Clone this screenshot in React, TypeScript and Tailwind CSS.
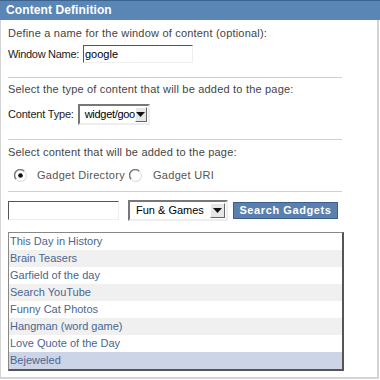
import React from 'react';

const gadgets = [
  'This Day in History',
  'Brain Teasers',
  'Garfield of the day',
  'Search YouTube',
  'Funny Cat Photos',
  'Hangman (word game)',
  'Love Quote of the Day',
  'Bejeweled',
];

function Radio({ checked }: { checked?: boolean }) {
  return (
    <svg width="13" height="13" viewBox="0 0 13 13" className="shrink-0">
      <path d="M2.2 10.3 A5.3 5.3 0 0 1 10.3 2.2" fill="none" stroke="#777" strokeWidth="1.5" />
      <path d="M10.8 2.8 A5.3 5.3 0 0 1 2.8 10.8" fill="none" stroke="#e2e2e2" strokeWidth="1.2" />
      {checked && <circle cx="6.5" cy="6.5" r="2.3" fill="#111" />}
    </svg>
  );
}

function ArrowBtn() {
  return (
    <span className="flex h-[15px] w-[15px] items-center justify-center border border-t-white border-l-white border-r-[#666] border-b-[#666] bg-[#e6e6e6]">
      <svg width="9" height="5" viewBox="0 0 9 5">
        <path d="M0 0 H9 L4.5 5 Z" fill="#111" />
      </svg>
    </span>
  );
}

export default function App() {
  return (
    <div
      className="h-[380px] w-[380px] bg-white text-[11px] leading-[13px] text-[#444]"
      style={{ fontFamily: '"Liberation Sans", Arial, sans-serif' }}
    >
      <div className="flex h-[379px] w-[379px] flex-col border-b-2 border-l border-r-2 border-[#d4d4d4]">
        <div className="-ml-px flex h-[20px] w-[380px] items-center border-t border-[#3c6390] bg-[#5a86b5] pl-[6px] text-[12px] font-bold tracking-[0.1px] text-white">
          Content Definition
        </div>

        <div className="flex flex-col pl-[7px] pr-[35px]">
          <div className="mt-[7px] tracking-[0.2px]">Define a name for the window of content (optional):</div>
          <div className="mt-[5px] flex items-center">
            <span className="tracking-[-0.3px] text-[#222]">Window Name:</span>
            <div className="ml-[4px] flex h-[18px] w-[110px] items-center border border-t-[#555] border-l-[#555] border-r-[#eee] border-b-[#eee] pl-[1px] text-[#000]">
              google
            </div>
          </div>
          <div className="mt-[14px] h-px bg-[#cfcfcf]" />

          <div className="mt-[5px] tracking-[0.2px]">Select the type of content that will be added to the page:</div>
          <div className="mt-[8px] flex items-center">
            <span className="tracking-[-0.2px] text-[#222]">Content Type:</span>
            <div className="ml-[4px] flex h-[21px] w-[72px] items-center justify-between border-2 border-t-[#777] border-l-[#777] border-r-[#eee] border-b-[#eee] pl-[5px] pr-[1px] text-[#000]">
              <span className="tracking-[-0.3px]">widget/goo</span>
              <ArrowBtn />
            </div>
          </div>
          <div className="mt-[14px] h-px bg-[#cfcfcf]" />

          <div className="mt-[6px] tracking-[0.2px]">Select content that will be added to the page:</div>
          <div className="mt-[10px] flex h-[13px] items-center pl-[6px] tracking-[0.3px] text-[#555]">
            <Radio checked />
            <span className="ml-[10px]">Gadget Directory</span>
            <span className="ml-[4px]">
              <Radio />
            </span>
            <span className="ml-[11px]">Gadget URI</span>
          </div>
          <div className="mt-[9px] h-px bg-[#cfcfcf]" />

          <div className="mt-[8px] flex items-center">
            <div className="h-[19px] w-[111px] border border-t-[#555] border-l-[#555] border-r-[#eee] border-b-[#eee]" />
            <div className="ml-[9px] flex h-[21px] w-[100px] items-center justify-between border-2 border-t-[#777] border-l-[#777] border-r-[#eee] border-b-[#eee] pl-[6px] pr-[1px] text-[#000]">
              <span>Fun &amp; Games</span>
              <ArrowBtn />
            </div>
            <div className="ml-[5px] flex h-[17px] w-[105px] items-center justify-center border border-[#3c5f8a] bg-[#5a7fb1] text-[11px] font-bold tracking-[0.6px] text-white">
              Search Gadgets
            </div>
          </div>

          <div className="mt-[11px] flex w-[336px] flex-col border-2 border-t border-l border-t-[#888] border-l-[#888] border-r-[#555] border-b-[#555]">
            {gadgets.map((g, i) => (
              <div
                key={g}
                className={
                  'flex h-[17px] items-center pl-[1px] text-[#4a6690] ' +
                  (i === gadgets.length - 1 ? 'bg-[#ccd5e7]' : i % 2 === 1 ? 'bg-[#f0f0f0]' : 'bg-white')
                }
              >
                {g}
              </div>
            ))}
          </div>
        </div>
      </div>
    </div>
  );
}
